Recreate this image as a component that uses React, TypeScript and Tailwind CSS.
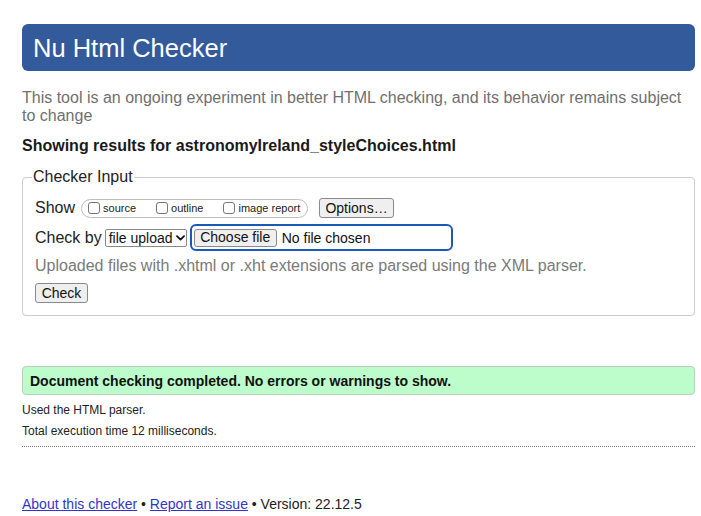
import React from 'react';

const Checkbox = ({ label }: { label: string }) => (
  <label className="flex items-center">
    <span className="w-[12px] h-[12px] rounded-[3px] border border-[#767676] bg-white" />
    <span className="ml-[3px] text-[11px] leading-[13px] text-[#222]">{label}</span>
  </label>
);

const NativeButton = ({ children, className }: { children: React.ReactNode; className?: string }) => (
  <button
    type="button"
    className={`flex items-center justify-center border border-[#8a8a8a] rounded-[3px] bg-[#efefef] text-[14px] text-[#111] ${className ?? ''}`}
  >
    {children}
  </button>
);

export default function App() {
  return (
    <div className="w-[701px] h-[516px] overflow-hidden bg-white pl-[22px] pr-[6px] pt-[24px] font-['Liberation_Sans',Arial,sans-serif] text-[#222]">
      <header className="h-[47px] rounded-[6px] bg-[#335a9a] px-[11px] flex items-center">
        <h1 className="text-white text-[25.5px] leading-[28px]">Nu Html Checker</h1>
      </header>

      <p className="mt-[18px] text-[16px] leading-[18px] text-[#6f6f6f]">
        This tool is an ongoing experiment in better HTML checking, and its behavior remains subject to change
      </p>

      <p className="mt-[12px] text-[16px] leading-[18px] font-bold text-[#1a1a1a]">
        Showing results for astronomyIreland_styleChoices.html
      </p>

      <fieldset className="mt-[13px] border border-[#cccccc] rounded-[4px] px-[12px] pb-[12px]">
        <legend className="-ml-[3px] px-[1px] text-[16px] leading-[18px] text-[#222]">Checker Input</legend>

        <div className="mt-[12px] flex items-center h-[20px]">
          <span className="text-[16px] leading-[18px]">Show</span>
          <div className="ml-[6px] h-[19px] w-[227px] rounded-full border border-[#bdbdbd] flex items-center pl-[6px] gap-[20px]">
            <Checkbox label="source" />
            <Checkbox label="outline" />
            <Checkbox label="image report" />
          </div>
          <NativeButton className="ml-[11px] w-[75px] h-[20px]">Options…</NativeButton>
        </div>

        <div className="mt-[6px] flex items-center h-[27px]">
          <span className="text-[16px] leading-[18px]">Check by</span>
          <div className="ml-[3px] w-[82px] h-[18px] border border-[#8a8a8a] rounded-[2px] bg-white flex items-center pl-[3px] text-[14px] leading-[16px] text-[#111]">
            file upload
            <svg className="ml-[3px]" width="9" height="6" viewBox="0 0 9 6" fill="none">
              <path d="M1 1.2 L4.5 4.6 L8 1.2" stroke="#111" strokeWidth="1.8" strokeLinecap="round" strokeLinejoin="round" />
            </svg>
          </div>
          <div className="ml-[3px] w-[263px] h-[27px] border-2 border-[#1b59b8] rounded-[6px] flex items-center pl-[2px]">
            <NativeButton className="w-[83px] h-[18px] rounded-[2px]">Choose file</NativeButton>
            <span className="ml-[5px] text-[14px] leading-[16px] text-[#111]">No file chosen</span>
          </div>
        </div>

        <p className="mt-[6px] text-[16px] leading-[18px] text-[#7a7a7a]">
          Uploaded files with .xhtml or .xht extensions are parsed using the XML parser.
        </p>

        <NativeButton className="mt-[8px] w-[53px] h-[20px]">Check</NativeButton>
      </fieldset>

      <div className="mt-[50px] h-[29px] rounded-[4px] border border-[#b8cfbd] bg-[#bdfdcb] flex items-center px-[7px]">
        <p className="text-[14px] leading-[16px] font-bold text-[#111]">
          Document checking completed. No errors or warnings to show.
        </p>
      </div>

      <p className="mt-[8px] text-[12px] leading-[14px] text-[#222]">Used the HTML parser.</p>
      <p className="mt-[7px] text-[12px] leading-[14px] text-[#222]">Total execution time 12 milliseconds.</p>

      <div className="mt-[8px] border-t border-dotted border-[#7a7a7a]" />

      <p className="mt-[49px] text-[14px] leading-[16px] text-[#222]">
        <a href="#" className="text-[#3434c8] underline">About this checker</a>
        {' • '}
        <a href="#" className="text-[#3434c8] underline">Report an issue</a>
        {' • Version: 22.12.5'}
      </p>
    </div>
  );
}
